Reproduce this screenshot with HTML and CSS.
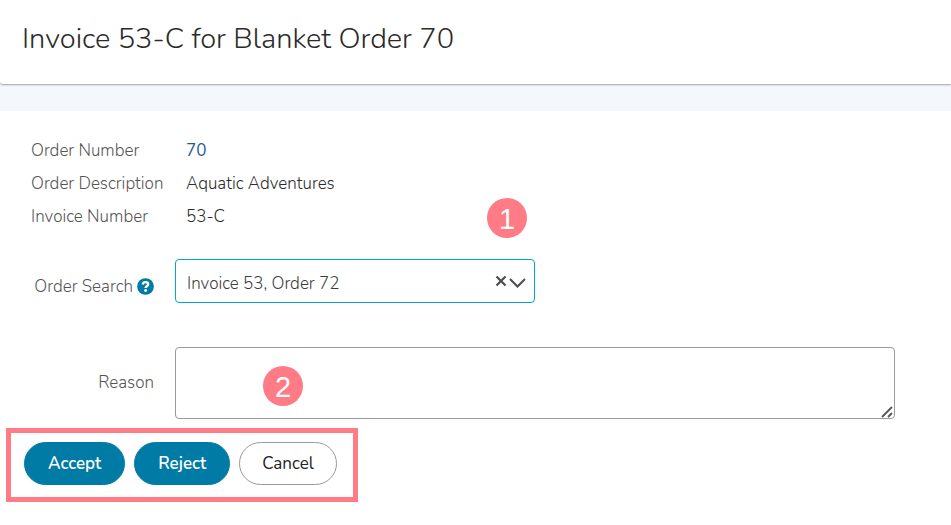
FILE: index.html
```html
<!DOCTYPE html>
<html lang="en">
<head>
    <meta charset="UTF-8">
    <meta name="viewport" content="width=device-width, initial-scale=1.0">
    <title>Invoice 53-C for Blanket Order 70</title>
    <link rel="stylesheet" href="styles.css">
</head>
<body>
    <header class="page-header">
        <h1>Invoice 53-C for Blanket Order 70</h1>
    </header>

    <main class="content">
        <!-- Order details -->
        <dl class="details">
            <dt>Order Number</dt>
            <dd><a href="#">70</a></dd>
            <dt>Order Description</dt>
            <dd>Aquatic Adventures</dd>
            <dt>Invoice Number</dt>
            <dd>53-C</dd>
        </dl>

        <form class="form">
            <div class="form-row search-row">
                <div class="form-label">
                    <label for="orderSearch">Order Search</label>
                    <button type="button" class="help" aria-label="Help">
                        <svg viewBox="0 0 512 512" width="17" height="17">
                            <circle cx="256" cy="256" r="252" fill="#007ba5"/>
                            <path d="M170 194c12-46 42-69 86-69 46 0 80 26 80 64 0 57-78 58-78 111" fill="none" stroke="#fff" stroke-width="72"/>
                            <circle cx="260" cy="375" r="44" fill="#fff"/>
                        </svg>
                    </button>
                </div>
                <div class="select-box">
                    <select id="orderSearch">
                        <option>Invoice 53, Order 72</option>
                    </select>
                    <button type="button" class="clear" aria-label="Clear">
                        <svg viewBox="0 0 12 12" width="12" height="12">
                            <path d="M1.5 1.5L10.5 10.5M10.5 1.5L1.5 10.5" stroke="#4d4d4d" stroke-width="2.2"/>
                        </svg>
                    </button>
                    <svg class="chevron" viewBox="0 0 17 10" width="17" height="10">
                        <path d="M1 1L8.5 8.5L16 1" fill="none" stroke="#4d4d4d" stroke-width="2"/>
                    </svg>
                    <span class="step step-search">1</span>
                </div>
            </div>

            <div class="form-row">
                <div class="form-label">
                    <label for="reason">Reason</label>
                </div>
                <div class="reason-box">
                    <textarea id="reason"></textarea>
                    <svg class="grip" viewBox="0 0 12 12" width="12" height="12">
                        <path d="M1 11L11 1M7 11L11 7" stroke="#555" stroke-width="1.8"/>
                    </svg>
                    <span class="step step-reason">2</span>
                </div>
            </div>

            <!-- Actions -->
            <div class="actions">
                <button type="button" class="btn btn-primary">Accept</button>
                <button type="button" class="btn btn-primary">Reject</button>
                <button type="button" class="btn">Cancel</button>
            </div>
        </form>
    </main>
</body>
</html>
```
FILE: styles.css
```css
* {
    box-sizing: border-box;
}

body {
    margin: 0;
    background: #fff;
    color: #2b2b2b;
    font-family: Nunito, Lato, sans-serif;
    font-size: 17px;
    font-weight: 350;
    line-height: 24px;
}

.page-header {
    position: relative;
    padding: 19px 22px 25px;
    border-radius: 0 0 0 3px;
    box-shadow: 0 1px 2px rgba(0, 0, 0, 0.35);
}

h1 {
    margin: 0;
    font-size: 29px;
    font-weight: 350;
    line-height: 40px;
}

.content {
    border-top: 27px solid #f4f8fc;
    padding-bottom: 22px;
}

.details {
    display: grid;
    grid-template-columns: 155px 1fr;
    row-gap: 9px;
    margin: 0;
    padding: 28px 31px 30px;
}

.details dt,
.form-label {
    color: #555;
}

.details dd {
    margin: 0;
}

.details a {
    color: #1f5a92;
    font-weight: 400;
    text-decoration: none;
}

.form-row {
    display: flex;
    align-items: center;
    gap: 21px;
    padding-right: 56px;
}

.search-row {
    margin-bottom: 44px;
}

.form-label {
    display: flex;
    align-items: center;
    justify-content: flex-end;
    gap: 4px;
    flex: 0 0 154px;
}

.search-row .form-label {
    padding-top: 11px;
}

.help,
.clear {
    display: flex;
    padding: 0;
    border: 0;
    background: none;
    cursor: pointer;
}

.select-box {
    position: relative;
    flex: 0 1 360px;
}

select {
    display: block;
    width: 100%;
    height: 44px;
    padding: 5px 48px 0 11px;
    appearance: none;
    border: 1px solid #00a5d9;
    border-radius: 4px;
    background: #fff;
    color: #3c3c3c;
    font: inherit;
}

.clear {
    position: absolute;
    top: 16px;
    right: 28px;
}

.chevron {
    position: absolute;
    top: 19px;
    right: 9px;
    pointer-events: none;
}

.reason-box {
    position: relative;
    flex: 1;
}

textarea {
    display: block;
    width: 100%;
    height: 72px;
    padding: 10px 12px;
    border: 1px solid #999;
    border-radius: 4px;
    font: inherit;
    resize: none;
}

.grip {
    position: absolute;
    right: 2px;
    bottom: 1px;
}

/* numbered callouts */
.step {
    position: absolute;
    width: 40px;
    height: 40px;
    border-radius: 50%;
    background: #ff7b86;
    color: #fff;
    font-family: "Liberation Sans", Arial, sans-serif;
    font-size: 29px;
    font-weight: 400;
    line-height: 42px;
    text-align: center;
}

.step-search {
    top: -61px;
    right: 8px;
}

.step-reason {
    top: 19px;
    left: 88px;
}

.actions {
    display: flex;
    gap: 9px;
    width: fit-content;
    margin: 9px 0 0 6px;
    padding: 9px 16px 12px 13px;
    border: 5px solid #ff7b86;
}

.btn {
    height: 43px;
    padding: 0 22px;
    border: 1px solid #999;
    border-radius: 22px;
    background: #fff;
    color: #222;
    font: inherit;
    font-weight: 400;
    cursor: pointer;
}

.btn-primary {
    padding: 0 23px;
    border-color: #007ba5;
    background: #007ba5;
    color: #fff;
    font-weight: 600;
}
```
